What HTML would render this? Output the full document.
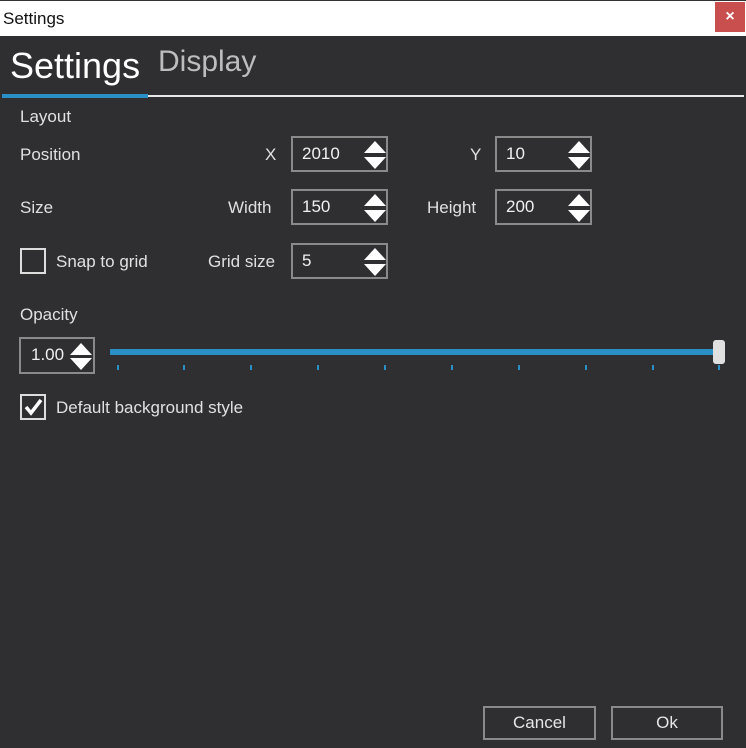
<!DOCTYPE html>
<html><head><style>
*{margin:0;padding:0;box-sizing:border-box}
body{width:746px;height:748px;background:#2f2f32;font-family:"Liberation Sans",sans-serif;position:relative;overflow:hidden;color:#e6e6e6}
.a{position:absolute}
.t{font-size:17px;color:#e0e0e0}
.box{position:absolute;border:2px solid #8a8a8a;background:#2f2f32}
.box span{position:absolute;left:9px;top:6px;font-size:17px;color:#f0f0f0}
.up,.dn{position:absolute;width:0;height:0;border-left:11px solid transparent;border-right:11px solid transparent}
.up{border-bottom:12px solid #fff}
.dn{border-top:12px solid #fff}
.btn{position:absolute;border:2px solid #8a8a8a;font-size:17px;text-align:center;line-height:30px;color:#e6e6e6}
.tick{position:absolute;top:365px;width:2px;height:5px;background:#2a8fc4}
</style></head><body>
<div class="a" style="left:0;top:0;width:746px;height:1px;background:#333"></div>
<div class="a" style="left:0;top:1px;width:746px;height:35px;background:#fff"></div>
<div class="a" style="left:3px;top:9px;font-size:17px;color:#111">Settings</div>
<div class="a" style="left:715px;top:2px;width:30px;height:30px;background:#c94f4f;color:#fff;font-size:16px;text-align:center;line-height:30px;font-weight:bold">×</div>
<div class="a" style="left:10px;top:45px;font-size:36px;color:#fff">Settings</div>
<div class="a" style="left:158px;top:45px;font-size:30px;color:#bdbdbd">Display</div>
<div class="a" style="left:2px;top:95px;width:742px;height:2px;background:#e8e8e8"></div>
<div class="a" style="left:2px;top:94px;width:146px;height:4px;background:#2a8fc4"></div>
<div class="a t" style="left:20px;top:107px">Layout</div>
<div class="a t" style="left:20px;top:145px">Position</div>
<div class="a t" style="left:265px;top:145px">X</div>
<div class="a t" style="left:470px;top:145px">Y</div>
<div class="a t" style="left:20px;top:198px">Size</div>
<div class="a t" style="left:228px;top:198px">Width</div>
<div class="a t" style="left:427px;top:198px">Height</div>
<div class="a" style="left:20px;top:248px;width:26px;height:26px;border:2px solid #ddd"></div>
<div class="a t" style="left:56px;top:252px">Snap to grid</div>
<div class="a t" style="left:208px;top:252px">Grid size</div>
<div class="a t" style="left:20px;top:305px">Opacity</div>
<div class="a" style="left:20px;top:394px;width:26px;height:26px;border:2px solid #ddd"></div>
<svg class="a" style="left:20px;top:394px" width="26" height="26"><path d="M6 13 L11 19 L21 6" stroke="#fff" stroke-width="3.5" fill="none"/></svg>
<div class="a t" style="left:56px;top:398px">Default background style</div>

<div class="box" style="left:291px;top:136px;width:97px;height:36px"><span>2010</span><div class="up" style="left:71px;top:3px"></div><div class="dn" style="left:71px;top:19px"></div></div>
<div class="box" style="left:495px;top:136px;width:97px;height:36px"><span>10</span><div class="up" style="left:71px;top:3px"></div><div class="dn" style="left:71px;top:19px"></div></div>
<div class="box" style="left:291px;top:189px;width:97px;height:36px"><span>150</span><div class="up" style="left:71px;top:3px"></div><div class="dn" style="left:71px;top:19px"></div></div>
<div class="box" style="left:495px;top:189px;width:97px;height:36px"><span>200</span><div class="up" style="left:71px;top:3px"></div><div class="dn" style="left:71px;top:19px"></div></div>
<div class="box" style="left:291px;top:243px;width:97px;height:36px"><span>5</span><div class="up" style="left:71px;top:3px"></div><div class="dn" style="left:71px;top:19px"></div></div>
<div class="box" style="left:19px;top:337px;width:76px;height:37px"><span style="left:10px">1.00</span><div class="up" style="left:49px;top:4px"></div><div class="dn" style="left:49px;top:19px"></div></div>

<div class="a" style="left:110px;top:349px;width:604px;height:6px;background:#2a8fc4"></div>
<div class="a" style="left:713px;top:340px;width:12px;height:24px;background:#e0e0e0;border-radius:3px"></div>
<div class="tick" style="left:117px"></div><div class="tick" style="left:183px"></div><div class="tick" style="left:250px"></div><div class="tick" style="left:317px"></div><div class="tick" style="left:384px"></div><div class="tick" style="left:451px"></div><div class="tick" style="left:518px"></div><div class="tick" style="left:585px"></div><div class="tick" style="left:652px"></div><div class="tick" style="left:718px"></div>

<div class="btn" style="left:483px;top:706px;width:113px;height:34px">Cancel</div>
<div class="btn" style="left:611px;top:706px;width:112px;height:34px">Ok</div>
</body></html>
